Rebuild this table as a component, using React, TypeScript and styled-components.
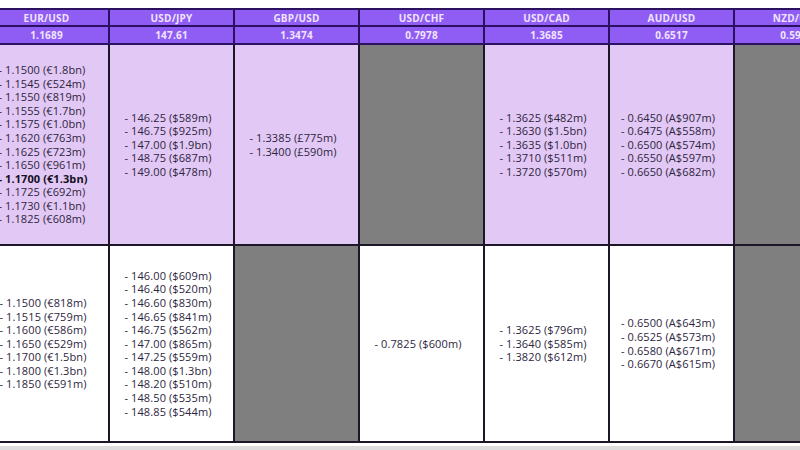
import React from "react";
import styled, { createGlobalStyle } from "styled-components";

const Global = createGlobalStyle`
  html, body { margin: 0; padding: 0; background: #ffffff; }
  body { width: 800px; height: 450px; overflow: hidden; }
`;

const Page = styled.div`
  width: 800px;
  height: 450px;
  overflow: hidden;
  padding-top: 8px;
  box-sizing: border-box;
  background: #ffffff;
`;

const Table = styled.div`
  display: grid;
  grid-template-columns: repeat(7, 125px);
  grid-template-rows: 17px 18px 201px 197px;
  margin-left: -15px;
  width: 875px;
  border-top: 2px solid #2b1160;
`;

const HeadCell = styled.div`
  box-sizing: border-box;
  background: #8f5df3;
  border-right: 2px solid #2b1160;
  border-bottom: 2px solid #2b1160;
  color: #f1e4ff;
  font-family: "Open Sans", "Liberation Sans", sans-serif;
  font-weight: 700;
  font-size: 10px;
  letter-spacing: 0.2px;
  display: flex;
  align-items: center;
  justify-content: center;
  line-height: 1;
`;

const BodyCell = styled.div<{ $tone: "purple" | "white" | "gray" }>`
  box-sizing: border-box;
  background: ${(p) =>
    p.$tone === "purple" ? "#e2c8f4" : p.$tone === "gray" ? "#7f7f7f" : "#ffffff"};
  border-right: 2px solid #1c1626;
  border-bottom: 2px solid #1c1626;
  display: flex;
  align-items: center;
  justify-content: center;
  padding-right: 7px;
`;

const List = styled.div`
  font-family: "Open Sans", "Liberation Sans", sans-serif;
  font-size: 11px;
  line-height: 13.6px;
  letter-spacing: 0.1px;
  color: #2d2540;
  text-align: left;
  white-space: nowrap;
`;

const Item = styled.div<{ $bold?: boolean }>`
  font-weight: ${(p) => (p.$bold ? 700 : 400)};
  color: ${(p) => (p.$bold ? "#15101f" : "#2d2540")};
`;

const BottomStrip = styled.div`
  margin-top: 3px;
  height: 6px;
  background: #dcdcdc;
`;

type Entry = { t: string; b?: boolean };
type Pair = { name: string; price: string; top: Entry[] | null; bottom: Entry[] | null };

const e = (arr: string[]): Entry[] => arr.map((t) => ({ t }));

const pairs: Pair[] = [
  {
    name: "EUR/USD",
    price: "1.1689",
    top: [
      ...e([
        "1.1500 (€1.8bn)",
        "1.1545 (€524m)",
        "1.1550 (€819m)",
        "1.1555 (€1.7bn)",
        "1.1575 (€1.0bn)",
        "1.1620 (€763m)",
        "1.1625 (€723m)",
        "1.1650 (€961m)",
      ]),
      { t: "1.1700 (€1.3bn)", b: true },
      ...e(["1.1725 (€692m)", "1.1730 (€1.1bn)", "1.1825 (€608m)"]),
    ],
    bottom: e([
      "1.1500 (€818m)",
      "1.1515 (€759m)",
      "1.1600 (€586m)",
      "1.1650 (€529m)",
      "1.1700 (€1.5bn)",
      "1.1800 (€1.3bn)",
      "1.1850 (€591m)",
    ]),
  },
  {
    name: "USD/JPY",
    price: "147.61",
    top: e([
      "146.25 ($589m)",
      "146.75 ($925m)",
      "147.00 ($1.9bn)",
      "148.75 ($687m)",
      "149.00 ($478m)",
    ]),
    bottom: e([
      "146.00 ($609m)",
      "146.40 ($520m)",
      "146.60 ($830m)",
      "146.65 ($841m)",
      "146.75 ($562m)",
      "147.00 ($865m)",
      "147.25 ($559m)",
      "148.00 ($1.3bn)",
      "148.20 ($510m)",
      "148.50 ($535m)",
      "148.85 ($544m)",
    ]),
  },
  {
    name: "GBP/USD",
    price: "1.3474",
    top: e(["1.3385 (£775m)", "1.3400 (£590m)"]),
    bottom: null,
  },
  {
    name: "USD/CHF",
    price: "0.7978",
    top: null,
    bottom: e(["0.7825 ($600m)"]),
  },
  {
    name: "USD/CAD",
    price: "1.3685",
    top: e([
      "1.3625 ($482m)",
      "1.3630 ($1.5bn)",
      "1.3635 ($1.0bn)",
      "1.3710 ($511m)",
      "1.3720 ($570m)",
    ]),
    bottom: e(["1.3625 ($796m)", "1.3640 ($585m)", "1.3820 ($612m)"]),
  },
  {
    name: "AUD/USD",
    price: "0.6517",
    top: e([
      "0.6450 (A$907m)",
      "0.6475 (A$558m)",
      "0.6500 (A$574m)",
      "0.6550 (A$597m)",
      "0.6650 (A$682m)",
    ]),
    bottom: e([
      "0.6500 (A$643m)",
      "0.6525 (A$573m)",
      "0.6580 (A$671m)",
      "0.6670 (A$615m)",
    ]),
  },
  {
    name: "NZD/USD",
    price: "0.5950",
    top: null,
    bottom: null,
  },
];

const Cell: React.FC<{ entries: Entry[] | null; tone: "purple" | "white" }> = ({
  entries,
  tone,
}) => (
  <BodyCell $tone={entries ? tone : "gray"}>
    {entries && (
      <List>
        {entries.map((en, i) => (
          <Item key={i} $bold={en.b}>
            - {en.t}
          </Item>
        ))}
      </List>
    )}
  </BodyCell>
);

export default function App() {
  return (
    <Page>
      <Global />
      <Table>
        {pairs.map((p) => (
          <HeadCell key={p.name + "h"}>{p.name}</HeadCell>
        ))}
        {pairs.map((p) => (
          <HeadCell key={p.name + "p"}>{p.price}</HeadCell>
        ))}
        {pairs.map((p) => (
          <Cell key={p.name + "t"} entries={p.top} tone="purple" />
        ))}
        {pairs.map((p) => (
          <Cell key={p.name + "b"} entries={p.bottom} tone="white" />
        ))}
      </Table>
      <BottomStrip />
    </Page>
  );
}
